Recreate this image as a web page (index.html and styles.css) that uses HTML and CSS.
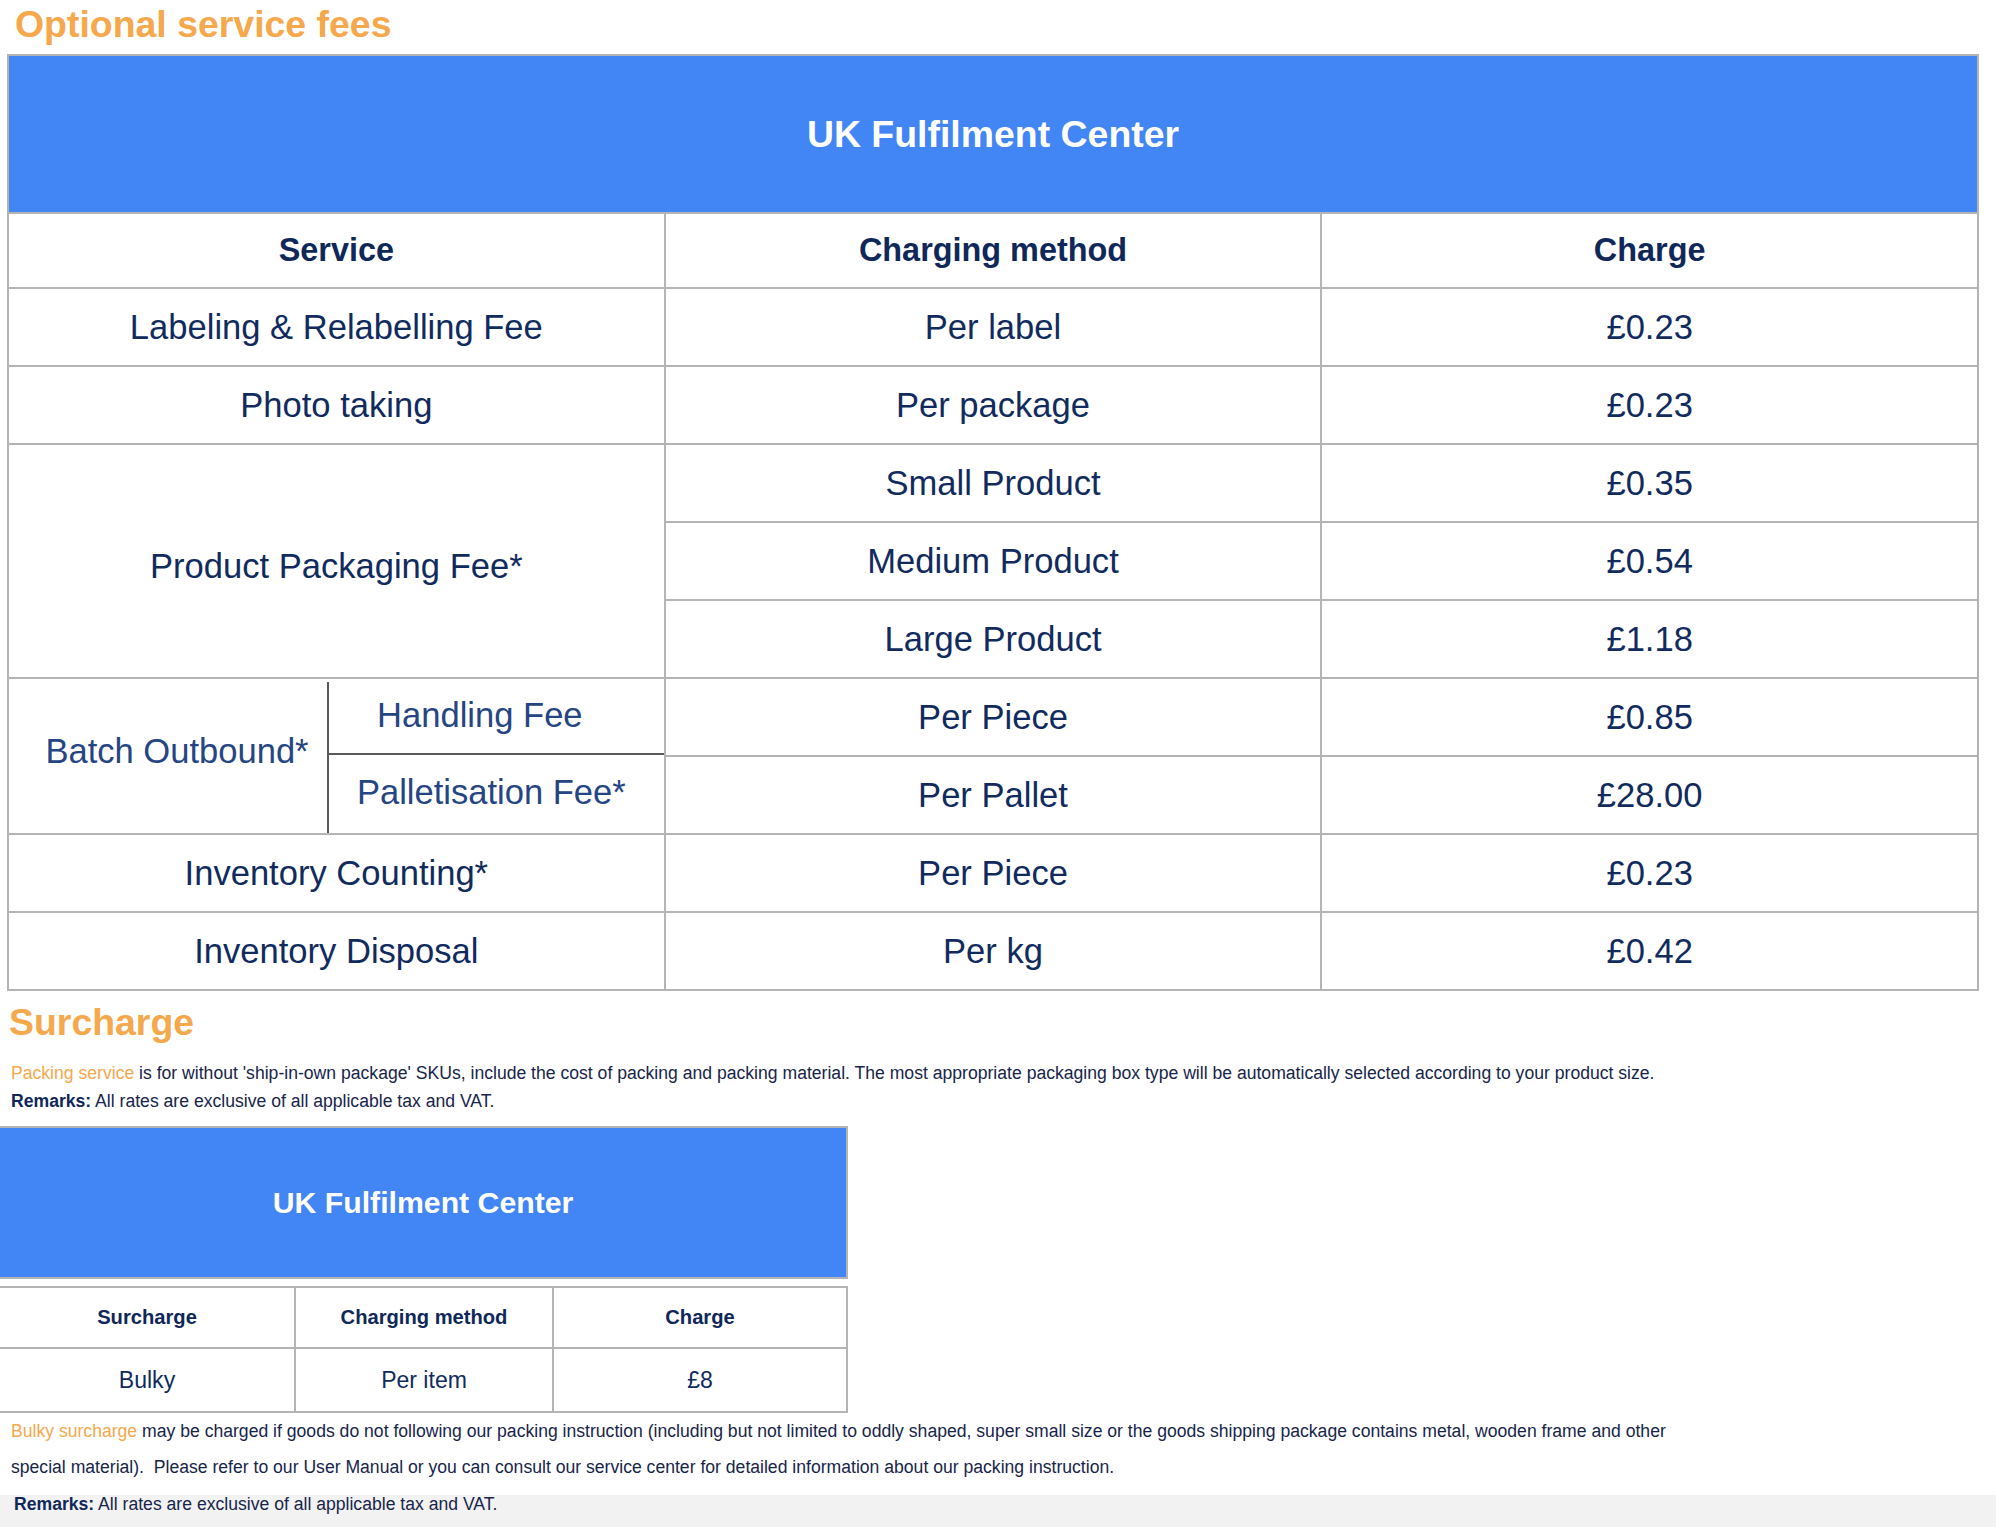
FILE: index.html
```html
<!DOCTYPE html>
<html lang="en">
<head>
<meta charset="utf-8">
<title>Optional service fees</title>
<link rel="stylesheet" href="styles.css">
</head>
<body>
<div class="sheet">
  <h2 class="section-title first">Optional service fees</h2>
  <div class="fee-table">
    <div class="banner">UK Fulfilment Center</div>
    <div class="cell head">Service</div>
    <div class="cell head">Charging method</div>
    <div class="cell head">Charge</div>

    <div class="cell">Labeling &amp; Relabelling Fee</div>
    <div class="cell">Per label</div>
    <div class="cell">£0.23</div>

    <div class="cell">Photo taking</div>
    <div class="cell">Per package</div>
    <div class="cell">£0.23</div>

    <div class="cell span3">Product Packaging Fee*</div>
    <div class="cell">Small Product</div>
    <div class="cell">£0.35</div>
    <div class="cell">Medium Product</div>
    <div class="cell">£0.54</div>
    <div class="cell">Large Product</div>
    <div class="cell">£1.18</div>

    <div class="cell batch">
      <div class="batch-name">Batch Outbound*</div>
      <div class="batch-parts">
        <div class="batch-part handling">Handling Fee</div>
        <div class="batch-part pallet">Palletisation Fee*</div>
      </div>
    </div>
    <div class="cell">Per Piece</div>
    <div class="cell">£0.85</div>
    <div class="cell">Per Pallet</div>
    <div class="cell">£28.00</div>

    <div class="cell">Inventory Counting*</div>
    <div class="cell">Per Piece</div>
    <div class="cell">£0.23</div>

    <div class="cell">Inventory Disposal</div>
    <div class="cell">Per kg</div>
    <div class="cell">£0.42</div>
  </div>

  <h2 class="section-title second">Surcharge</h2>
  <p class="note"><span class="hl">Packing service</span> is for without 'ship-in-own package' SKUs, include the cost of packing and packing material. The most appropriate packaging box type will be automatically selected according to your product size.</p>
  <p class="note"><strong>Remarks:</strong> All rates are exclusive of all applicable tax and VAT.</p>

  <div class="banner-small">UK Fulfilment Center</div>
  <div class="sur-table">
    <div class="scell shead">Surcharge</div>
    <div class="scell shead">Charging method</div>
    <div class="scell shead">Charge</div>
    <div class="scell">Bulky</div>
    <div class="scell">Per item</div>
    <div class="scell">£8</div>
  </div>

  <p class="note wide"><span class="hl">Bulky surcharge</span> may be charged if goods do not following our packing instruction (including but not limited to oddly shaped, super small size or the goods shipping package contains metal, wooden frame and other special material).&nbsp; Please refer to our User Manual or you can consult our service center for detailed information about our packing instruction.</p>
</div>
<p class="note foot"><strong>Remarks:</strong> All rates are exclusive of all applicable tax and VAT.</p>
</body>
</html>
```

FILE: styles.css
```css
html, body {
  margin: 0;
  padding: 0;
}

body {
  background: #f2f2f2;
  min-height: 100vh;
  font-family: "Liberation Sans", Arial, Helvetica, sans-serif;
  color: #112b5e;
  overflow: hidden;
}

.sheet {
  background: #ffffff;
  padding-top: 3px;
  padding-bottom: 10px;
}

.section-title {
  margin: 0;
  font-size: 37.44px;
  line-height: 42px;
  font-weight: 700;
  color: #f5a84c;
}

.section-title.first {
  padding-left: 15px;
  margin-bottom: 9px;
}

.section-title.second {
  padding-left: 9px;
  margin-top: 10px;
  margin-bottom: 16px;
}

/* ---------- main fee table ---------- */
.fee-table {
  box-sizing: border-box;
  width: 1972px;
  margin-left: 7px;
  display: grid;
  grid-template-columns: 1fr 1fr 1fr;
  grid-template-rows: 156px 73px repeat(9, 76px);
  gap: 2px;
  padding: 2px;
  background: #b4b4b4;
}

.banner {
  grid-column: 1 / -1;
  background: #4285f4;
  color: #ffffff;
  font-size: 37.44px;
  font-weight: 700;
  display: flex;
  align-items: center;
  justify-content: center;
}

.cell {
  background: #ffffff;
  display: flex;
  align-items: center;
  justify-content: center;
  font-size: 34.56px;
  color: #112b5e;
  white-space: nowrap;
}

.cell.head {
  font-size: 32.4px;
  font-weight: 700;
  color: #0f2859;
}

.cell.span3 {
  grid-column: 1;
  grid-row: span 3;
  padding-top: 10px;
}

.cell.batch {
  grid-column: 1;
  grid-row: span 2;
  align-items: stretch;
  justify-content: flex-start;
  color: #264583;
}

.batch-name {
  width: 318px;
  display: flex;
  align-items: center;
  justify-content: center;
  padding-left: 18px;
  padding-bottom: 10px;
  box-sizing: border-box;
}

.batch-parts {
  flex: 1;
  display: flex;
  flex-direction: column;
  margin-top: 3px;
  border-left: 2px solid #5a5a5a;
}

.batch-part {
  display: flex;
  align-items: center;
  justify-content: center;
  box-sizing: border-box;
}

.batch-part.handling {
  height: 73px;
  border-bottom: 2px solid #5a5a5a;
  padding-bottom: 5px;
  padding-right: 33px;
}

.batch-part.pallet {
  flex: 1;
  padding-bottom: 4px;
  padding-right: 10px;
}

/* ---------- notes ---------- */
.note {
  margin: 0;
  font-size: 17.6px;
  line-height: 28px;
  padding-left: 11px;
  color: #17254a;
}

.note strong {
  color: #0f2859;
}

.hl {
  color: #f5a84c;
}

.note.wide {
  width: 1700px;
  line-height: 36px;
}

.note.foot {
  line-height: 19px;
  padding-left: 14px;
}

/* ---------- surcharge table ---------- */
.banner-small {
  box-sizing: border-box;
  width: 848px;
  height: 153px;
  margin-top: 11px;
  background: #4285f4;
  border: 2px solid #b4b4b4;
  border-left: 0;
  color: #ffffff;
  font-size: 30.24px;
  font-weight: 700;
  display: flex;
  align-items: center;
  justify-content: center;
}

.sur-table {
  box-sizing: border-box;
  width: 848px;
  margin-top: 7px;
  display: grid;
  grid-template-columns: 294px 256px 292px;
  grid-template-rows: 59px 62px;
  gap: 2px;
  padding: 2px 2px 2px 0;
  background: #b4b4b4;
}

.scell {
  background: #ffffff;
  display: flex;
  align-items: center;
  justify-content: center;
  font-size: 23.04px;
  color: #112b5e;
}

.scell.shead {
  font-size: 20.16px;
  font-weight: 700;
  color: #0f2859;
}
```
